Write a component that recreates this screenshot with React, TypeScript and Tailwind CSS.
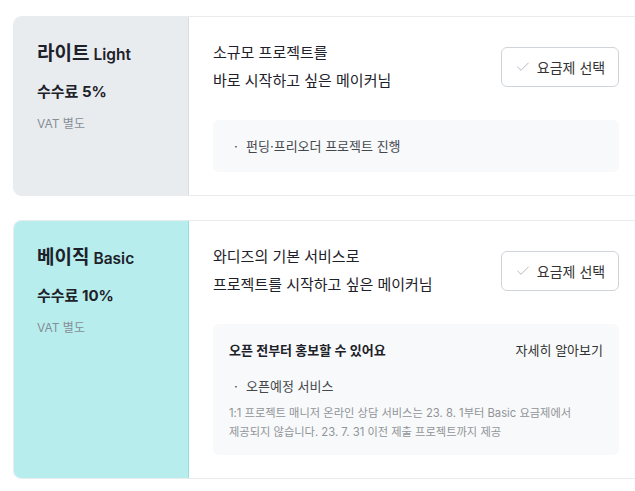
import { Check } from "lucide-react";

interface PlanProps {
    name: string;
    eng: string;
    fee: string;
    panel: string;
    lines: string[];
    children: React.ReactNode;
}

function PlanCard(props: PlanProps) {
    return (
        <div className="flex w-[628px] rounded-l-[8px] border border-[#e9ecef] bg-white">
            <div className={`w-[175px] shrink-0 rounded-l-[7px] border-r pl-[23px] pt-[23px] ${props.panel}`}>
                <div className="flex items-baseline gap-[4px] leading-[28px] text-[#1d2129]">
                    <span className="text-[19px] font-bold">{props.name}</span>
                    <span className="text-[15.5px] font-semibold">{props.eng}</span>
                </div>
                <div className="mt-[11px] text-[15px] font-bold leading-[24px] text-[#1d2129]">{props.fee}</div>
                <div className="mt-[11px] text-[12px] leading-[18px] text-[#868e96]">VAT 별도</div>
            </div>

            <div className="flex flex-1 flex-col pl-[24px] pr-[21px] pt-[22px] pb-[23px]">
                <div className="flex items-center justify-between">
                    <div className="text-[15px] leading-[28px] text-[#1d2129]">
                        {props.lines.map((l) => (
                            <p key={l}>{l}</p>
                        ))}
                    </div>
                    <button className="flex h-[40px] w-[118px] items-center justify-center gap-[6px] rounded-[6px] border border-[#cfd4da] bg-white text-[14px] text-[#333]">
                        <Check size={16} strokeWidth={1.3} className="text-[#a9afb6]" />
                        요금제 선택
                    </button>
                </div>
                <div className="mt-[25px] rounded-[6px] bg-[#f8f9fa] px-[16px]">{props.children}</div>
            </div>
        </div>
    );
}

function Bullet(props: { text: string }) {
    return (
        <div className="flex items-center text-[13px] leading-[20px] text-[#44484d]">
            <span className="w-[17px] pl-[5px]">·</span>
            <span>{props.text}</span>
        </div>
    );
}

export default function App() {
    return (
        <div
            className="w-[635px] h-[491px] overflow-hidden bg-white pl-[13px] pt-[16px]"
            style={{ fontFamily: '"Inter", "Noto Sans CJK KR", sans-serif' }}
        >
            <PlanCard
                name="라이트"
                eng="Light"
                fee="수수료 5%"
                panel="bg-[#e9ecef] border-[#d9dde1]"
                lines={["소규모 프로젝트를", "바로 시작하고 싶은 메이커님"]}
            >
                <div className="py-[16px]">
                    <Bullet text="펀딩·프리오더 프로젝트 진행" />
                </div>
            </PlanCard>

            <div className="h-[24px]" />

            <PlanCard
                name="베이직"
                eng="Basic"
                fee="수수료 10%"
                panel="bg-[#b7eded] border-[#9edcdc]"
                lines={["와디즈의 기본 서비스로", "프로젝트를 시작하고 싶은 메이커님"]}
            >
                <div className="pt-[16px] pb-[13px]">
                    <div className="flex items-center justify-between leading-[20px]">
                        <span className="text-[13px] font-semibold text-[#1d2129]">오픈 전부터 홍보할 수 있어요</span>
                        <span className="text-[13px] text-[#333]">자세히 알아보기</span>
                    </div>
                    <div className="mt-[16px]">
                        <Bullet text="오픈예정 서비스" />
                    </div>
                    <p className="mt-[8px] text-[11.25px] leading-[19px] text-[#909499]">
                        1:1 프로젝트 매니저 온라인 상담 서비스는 23. 8. 1부터 Basic 요금제에서
                        <br />
                        제공되지 않습니다. 23. 7. 31 이전 제출 프로젝트까지 제공
                    </p>
                </div>
            </PlanCard>
        </div>
    );
}
